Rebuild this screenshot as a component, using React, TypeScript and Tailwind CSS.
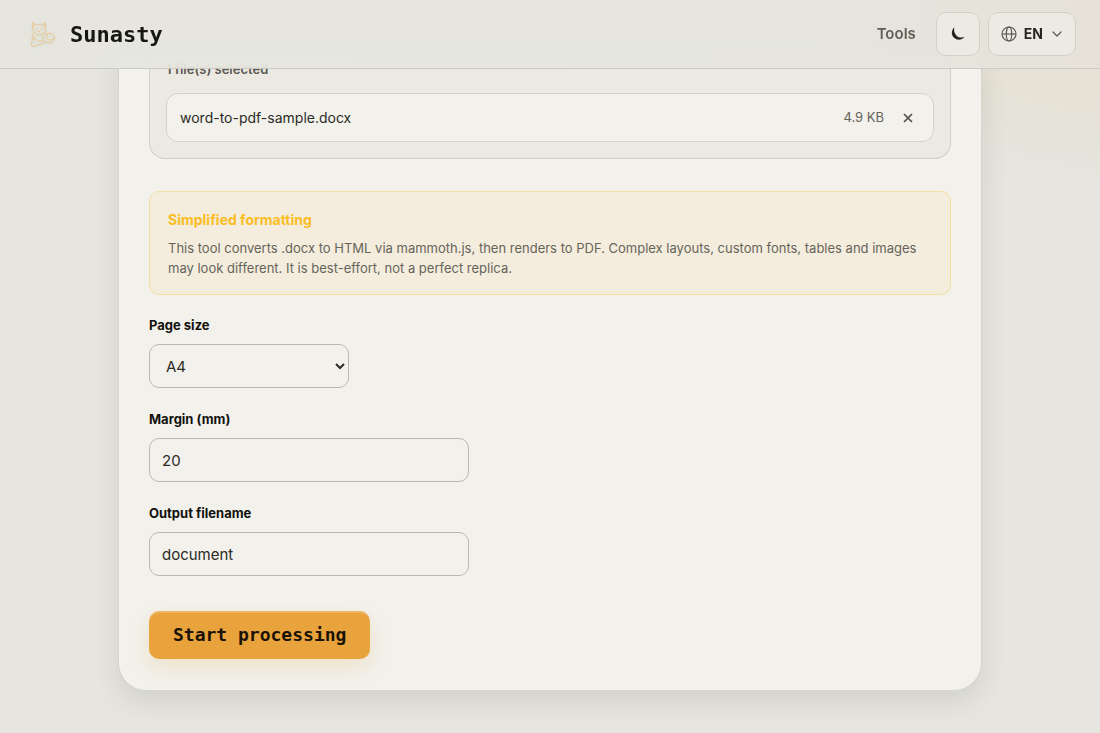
import { useState } from "react";

function CatLogo() {
  return (
    <svg
      viewBox="0 0 32 32"
      className="size-8 opacity-75 drop-shadow-sm"
      fill="none"
      stroke="#ecb96e"
      strokeWidth="0.9"
      strokeLinecap="round"
      strokeLinejoin="round"
      aria-hidden="true"
    >
      <path d="M7.5 10.5 7.2 4.2l3.8 2.7c1.8-.5 4-.5 5.8 0l3.6-2.5.2 6.3c.5 3.5-2.5 6.1-6.4 6.1s-7-2.800-6.700-6.300Z" />
      <path d="m8.6 6.2.6 2.6M19.2 6.4l-.6 2.4M10.8 11.2h1.6M15.8 11.2h1.6M13.2 13.2h1.7l-.8.9" />
      <path d="M8.400 15.200c-1.500 2.200-1.600 4.200-1 6.400l-1 4.200c-.5 2.300 1.300 3.200 3.300 2.500l8.200-2.800c2.200-.8 1.700-3.300-.5-3.100l-4.700.6" />
      <path d="M19.600 14.600c.5 1.300 1.600 1.800 3 1.300 2.300-.9 5.200-.6 6.300 1.200 1.300 2.300.8 5.200-1.200 6.400-2.200 1.300-5.600 1.300-8.700 1M22.600 15.900c-1.400 1.800-1.200 4.600.6 5.700 1.800 1 4 .4 5.600-1.200M7.400 21.600l3-1.200M9 18.200l1.500 4M17.800 16.600l1 5.400" />
    </svg>
  );
}

function MoonIcon() {
  return (
    <svg viewBox="0 0 16 16" className="size-4" fill="#1a1a16" aria-hidden="true">
      <path d="M4.300 1.300C1 4.700 1.200 9.300 4 11.800c3 2.800 7.800 2.600 10.400-.7-2.800 1-6 .5-8.100-1.700C4.200 7.300 3.700 4.100 4.300 1.300Z" />
    </svg>
  );
}

function GlobeIcon() {
  return (
    <svg
      viewBox="0 0 16 16"
      className="size-4"
      fill="none"
      stroke="#55534c"
      strokeWidth="1.2"
      aria-hidden="true"
    >
      <circle cx="8" cy="8" r="7" />
      <ellipse cx="8" cy="8" rx="2.7" ry="7" />
      <path d="M1 8h14" />
    </svg>
  );
}

function Header() {
  return (
    <header className="sticky top-0 z-10 border-b border-[#cbcac4] bg-[linear-gradient(90deg,#e6e7df_0%,#e6e6df_75%,#e6e3d9_100%)] opacity-95">
      <div className="flex h-[68px] items-center justify-between px-6">
        <a href="#" className="flex items-center gap-3">
          <span className="flex w-[34px] justify-center">
            <CatLogo />
          </span>
          <span className="font-['DejaVu_Sans_Mono',monospace] text-[22px] font-bold text-[#0c0b08]">
            Sunasty
          </span>
        </a>
        <nav className="flex items-center gap-2">
          <a href="#" className="mr-3 text-[15px] font-semibold text-[#5a584f]">
            Tools
          </a>
          <button
            type="button"
            aria-label="Toggle theme"
            className="flex size-11 items-center justify-center rounded-[10px] border border-[#d1cfc8] bg-[#eeebe4]"
          >
            <MoonIcon />
          </button>
          <button
            type="button"
            className="flex h-11 items-center gap-[7px] rounded-[10px] border border-[#d1cfc8] bg-[#eeebe4] px-3 text-sm font-bold text-[#1c1b17]"
          >
            <GlobeIcon />
            EN
            <svg
              viewBox="0 0 12 12"
              className="ml-px size-3"
              fill="none"
              stroke="#55534c"
              strokeWidth="1.2"
              strokeLinecap="round"
              strokeLinejoin="round"
              aria-hidden="true"
            >
              <path d="m2 4 4 4 4-4" />
            </svg>
          </button>
        </nav>
      </div>
    </header>
  );
}

function FileList() {
  return (
    <section className="rounded-b-2xl border border-t-0 border-[#cfcec8] bg-[#ece9e3] px-4 pt-[6px] pb-4">
      <p className="text-[13px] leading-5 font-semibold text-[#5a584f]">1 file(s) selected</p>
      <ul className="mt-[14px]">
        <li className="flex h-[49px] items-center rounded-xl border border-[#d3d2cc] bg-[#f2f1ec] px-[13px]">
          <span className="flex-1 text-sm text-[#2c2b26]">word-to-pdf-sample.docx</span>
          <span className="text-[13px] text-[#66645b]">4.9 KB</span>
          <button
            type="button"
            aria-label="Remove file"
            className="ml-3 flex size-6 items-center justify-center"
          >
            <svg viewBox="0 0 10 10" className="size-[10px]" stroke="#4f4d45" strokeWidth="1.7" aria-hidden="true">
              <path d="m1 1 8 8M9 1 1 9" />
            </svg>
          </button>
        </li>
      </ul>
    </section>
  );
}

const labelClass = "block text-[13px] leading-[22px] font-bold text-[#12110d]";
const fieldClass =
  "mt-2 block h-11 max-w-full rounded-[10px] border border-[#b9b8b2] bg-transparent px-3 text-[15px] text-[#2c2b26]";

export default function App() {
  const [margin, setMargin] = useState("20");
  const [filename, setFilename] = useState("document");

  return (
    <div className="min-h-screen bg-[#e6e5e0] bg-[radial-gradient(ellipse_300px_200px_at_100%_0,#e7e1d4_0%,#e6e2d6_50%,transparent_100%)] font-['Inter',sans-serif]">
      <Header />
      <main className="mx-auto -mt-4 max-w-[864px] pb-[42px]">
        <div className="rounded-b-[28px] border border-t-0 border-[#d5d4cd] bg-[#f2f1ec] px-[30px] pb-[31px] shadow-[0_10px_26px_rgba(60,60,40,0.12)]">
          <FileList />

          <div className="mt-8 rounded-[10px] border border-[#f4dfa0] bg-[#f4eddd] px-[18px] pt-[18px] pb-4">
            <h2 className="text-sm leading-5 font-bold text-[#f9bd24]">Simplified formatting</h2>
            <p className="mt-2 text-[13px] leading-5 text-[#66645b]">
              This tool converts .docx to HTML via mammoth.js, then renders to PDF. Complex layouts,
              custom fonts, tables and images may look different. It is best-effort, not a perfect
              replica.
            </p>
          </div>

          <form className="mt-[19px]" onSubmit={(e) => e.preventDefault()}>
            <div className="space-y-5">
              <div>
                <label htmlFor="page-size" className={labelClass}>
                  Page size
                </label>
                <select id="page-size" className={`${fieldClass} w-[200px]`}>
                  <option>A4</option>
                  <option>Letter</option>
                </select>
              </div>
              <div>
                <label htmlFor="margin" className={labelClass}>
                  Margin (mm)
                </label>
                <input
                  id="margin"
                  inputMode="numeric"
                  value={margin}
                  onChange={(e) => setMargin(e.target.value)}
                  className={`${fieldClass} w-80`}
                />
              </div>
              <div>
                <label htmlFor="filename" className={labelClass}>
                  Output filename
                </label>
                <input
                  id="filename"
                  value={filename}
                  onChange={(e) => setFilename(e.target.value)}
                  className={`${fieldClass} w-80`}
                />
              </div>
            </div>
            <button
              type="submit"
              className="mt-[35px] h-12 rounded-[10px] bg-[#e8a33d] px-6 font-['DejaVu_Sans_Mono',monospace] text-lg font-bold text-[#1a1206] shadow-[0_8px_20px_rgba(232,163,61,0.2),inset_0_2px_0_rgba(255,255,255,0.22)]"
            >
              Start processing
            </button>
          </form>
        </div>
      </main>
    </div>
  );
}
